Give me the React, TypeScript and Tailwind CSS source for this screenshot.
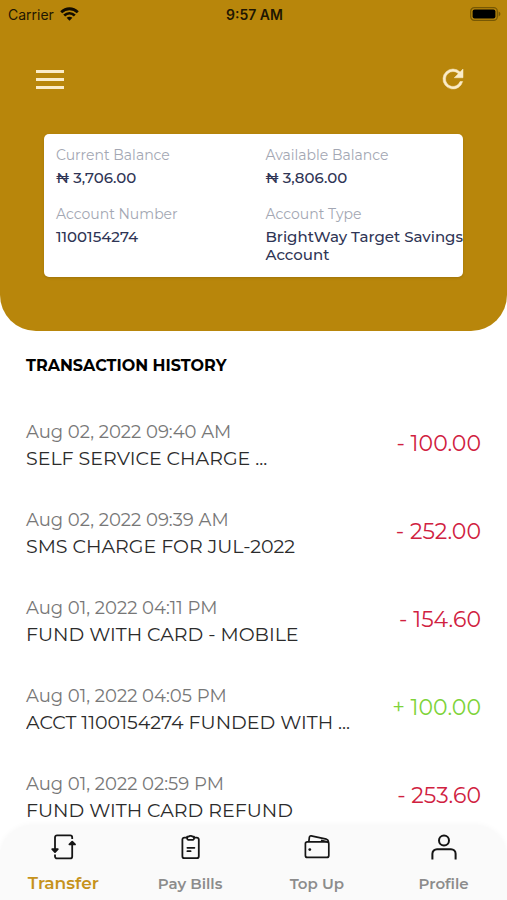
import type { ReactNode } from "react";

type Transaction = { date: string; title: string; amount: string; credit?: boolean };

const transactions: Transaction[] = [
  { date: "Aug 02, 2022 09:40 AM", title: "SELF SERVICE CHARGE ...", amount: "- 100.00" },
  { date: "Aug 02, 2022 09:39 AM", title: "SMS CHARGE FOR JUL-2022", amount: "- 252.00" },
  { date: "Aug 01, 2022 04:11 PM", title: "FUND WITH CARD - MOBILE", amount: "- 154.60" },
  { date: "Aug 01, 2022 04:05 PM", title: "ACCT 1100154274 FUNDED WITH ...", amount: "+ 100.00", credit: true },
  { date: "Aug 01, 2022 02:59 PM", title: "FUND WITH CARD REFUND", amount: "- 253.60" },
];

function StatusBar() {
  return (
    <div className="grid h-7 grid-cols-3 items-center pr-1.5 pl-2 font-['Inter',sans-serif] text-[14px] text-[#1f1602]">
      <div className="flex items-center gap-1.5">
        <span>Carrier</span>
        <svg className="h-[14px] w-[19px]" viewBox="0 0 19 14" fill="none" stroke="#120c00" strokeWidth="2.8" aria-hidden="true">
          <path d="M1.2 5.2C6 .6 13 .6 17.8 5.2" />
          <path d="M4.2 8.5c3.2-2.9 7.4-2.9 10.6 0" />
          <path d="M6.6 10.8c1.7-1.5 4.1-1.5 5.8 0L9.5 13.8Z" fill="#120c00" stroke="none" />
        </svg>
      </div>
      <span className="text-center font-semibold">9:57 AM</span>
      <svg className="h-[14px] w-[31px] justify-self-end" viewBox="0 0 31 14" aria-hidden="true">
        <rect x="0.7" y="0.7" width="26.6" height="12.6" rx="3.6" fill="none" stroke="#775804" strokeWidth="1.2" />
        <rect x="2.6" y="2.6" width="22.8" height="8.8" rx="2" fill="#000" />
        <path d="M28.6 4.6c2.4.8 2.4 4 0 4.8Z" fill="#775804" />
      </svg>
    </div>
  );
}

function Detail({ label, children }: { label: string; children: ReactNode }) {
  return (
    <div className="pl-3">
      <dt className="text-[14px] leading-5 text-[#a3a7b3]">{label}</dt>
      <dd className="mt-1 text-[15px] leading-[18px] font-medium text-[#2f3555]">{children}</dd>
    </div>
  );
}

function TransferIcon() {
  return (
    <svg className="h-7 w-7" viewBox="0 0 28 28" fill="none" stroke="#151515" strokeWidth="1.8" strokeLinejoin="round" aria-hidden="true">
      <path d="M6 17V4.4a2 2 0 0 1 2-2h13.2a2 2 0 0 1 2 2V6" />
      <path d="M23.2 10v13.4a2 2 0 0 1-2 2H8a2 2 0 0 1-2-2V21.6" />
      <path d="M3.2 16.2h5.6L6 19ZM20.4 11.4H26l-2.8-2.8Z" fill="#151515" />
    </svg>
  );
}

function BillsIcon() {
  return (
    <svg className="h-7 w-7" viewBox="0 0 28 28" fill="none" stroke="#151515" strokeWidth="1.8" strokeLinecap="round" strokeLinejoin="round" aria-hidden="true">
      <path d="M11 4.6H8.4a2 2 0 0 0-2 2v16.6a2 2 0 0 0 2 2h12.4a2 2 0 0 0 2-2V6.6a2 2 0 0 0-2-2h-2.6" />
      <path d="M11.2 3.6h1.5c.5-1.1 3.3-1.1 3.8 0H18v2.3l-1 1h-4.8l-1-1Z" />
      <path d="M11.4 14.8h7M11.4 18.2h3.2" />
    </svg>
  );
}

function WalletIcon() {
  return (
    <svg className="h-7 w-7" viewBox="0 0 28 28" fill="none" stroke="#151515" strokeWidth="1.7" strokeLinejoin="round" aria-hidden="true">
      <rect x="2.4" y="8.8" width="23.4" height="15.6" rx="2" />
      <path d="M5.8 8.8 6.4 4.2Q6.7 2.6 8.2 2.9L23.4 6.2q2 .5 2.1 3.2" />
      <path d="M18 7.2 25 9" />
      <circle cx="6.8" cy="16.6" r="1.4" fill="#151515" stroke="none" />
    </svg>
  );
}

function ProfileIcon() {
  return (
    <svg className="h-7 w-7" viewBox="0 0 28 28" fill="none" stroke="#151515" strokeWidth="2" aria-hidden="true">
      <circle cx="14" cy="7.4" r="5" />
      <path d="M2.4 26.4v-5.6a4.6 4.6 0 0 1 4.6-4.6h14a4.6 4.6 0 0 1 4.6 4.6v5.6" />
    </svg>
  );
}

const tabs = [
  { label: "Transfer", icon: <TransferIcon />, active: true },
  { label: "Pay Bills", icon: <BillsIcon />, active: false },
  { label: "Top Up", icon: <WalletIcon />, active: false },
  { label: "Profile", icon: <ProfileIcon />, active: false },
];

export default function App() {
  return (
    <div className="flex min-h-screen flex-col bg-white font-['Montserrat','Inter',sans-serif]">
      <header className="rounded-b-[36px] bg-[#b8860b] pb-[54px]">
        <StatusBar />
        <div className="flex items-center justify-between px-9 pt-9">
          <button type="button" aria-label="Open menu" className="flex h-[30px] w-7 flex-col justify-center gap-[5px]">
            <span className="h-[3px] w-full bg-[#fbecc8]" />
            <span className="h-[3px] w-full bg-[#fbecc8]" />
            <span className="h-[3px] w-full bg-[#fbecc8]" />
          </button>
          <button type="button" aria-label="Refresh" className="flex h-[30px] w-9 items-center justify-center">
            <svg className="h-[30px] w-[30px]" viewBox="0 0 24 24" fill="#fbecc8" stroke="#fbecc8" strokeWidth="0.4" aria-hidden="true">
              <path d="M17.65 6.35A7.96 7.96 0 0 0 12 4a8 8 0 1 0 7.73 10h-2.08A6 6 0 1 1 12 6c1.66 0 3.14.69 4.22 1.78L13 11h7V4l-2.35 2.35Z" />
            </svg>
          </button>
        </div>
        <dl className="mx-11 mt-10 grid grid-cols-2 gap-y-[17px] rounded-[5px] bg-white pt-[11px] pb-[13px] shadow-sm">
          <Detail label="Current Balance">₦ 3,706.00</Detail>
          <Detail label="Available Balance">₦ 3,806.00</Detail>
          <Detail label="Account Number">1100154274</Detail>
          <Detail label="Account Type">
            <span className="whitespace-nowrap">BrightWay Target Savings</span> Account
          </Detail>
        </dl>
      </header>

      <main className="flex-1 px-[26px] pt-[23px]">
        <h1 className="text-[16px] leading-6 font-bold text-black">TRANSACTION HISTORY</h1>
        <ul className="flex flex-col gap-10 pt-11">
          {transactions.map((t) => (
            <li key={t.date} className="flex h-12 justify-between gap-2">
              <div className="min-w-0">
                <p className="text-[18px] leading-5 text-[#777]">{t.date}</p>
                <p className="mt-[5px] truncate text-[19px] leading-6 text-[#2b2b2b]">{t.title}</p>
              </div>
              <p className={t.credit ? "shrink-0 text-[22px] leading-11 text-[#7ed33a]" : "shrink-0 text-[22px] leading-11 text-[#d0213f]"}>
                {t.amount}
              </p>
            </li>
          ))}
        </ul>
      </main>

      <nav className="grid grid-cols-4 rounded-t-[32px] bg-[#fafafa] pt-2 pb-1 shadow-[0_0_6px_rgba(0,0,0,0.04)]">
        {tabs.map((tab) => (
          <a key={tab.label} href="#" className="flex flex-col items-center gap-[11px]">
            {tab.icon}
            <span className={tab.active ? "text-[17px] leading-[22px] font-semibold text-[#c6921c]" : "text-[15px] leading-6 font-semibold text-[#8c8c8c]"}>
              {tab.label}
            </span>
          </a>
        ))}
      </nav>
    </div>
  );
}
